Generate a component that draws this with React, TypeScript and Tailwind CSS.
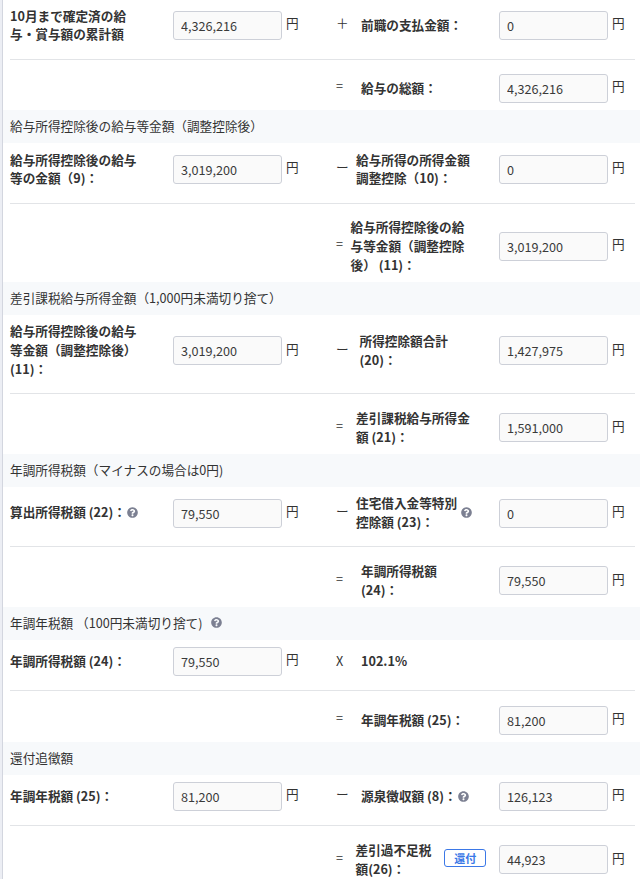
import { ReactNode } from "react";
import { FaQuestionCircle } from "react-icons/fa";

const Help = ({ className = "" }: { className?: string }) => (
  <FaQuestionCircle className={`shrink-0 text-[#7c8092] ${className}`} size={11} />
);

function Amount({ value, unitClass }: { value: string; unitClass: string }) {
  return (
    <div className="flex">
      <input
        readOnly
        value={value}
        className="h-[29px] w-[109px] rounded-[3px] border border-[#cdd0d8] bg-[#fafafa] px-[7px] text-[#3a3a3a] outline-none"
      />
      <span className={`ml-[4px] leading-[19px] ${unitClass}`}>円</span>
    </div>
  );
}

type RowProps = {
  className: string;
  label?: ReactNode;
  amount?: string;
  op: string;
  result: ReactNode;
  resultClass?: string;
  resultAmount?: string;
  unitClass?: string;
  opClass?: string;
  labelClass?: string;
};

function Row({
  className,
  label,
  amount,
  op,
  result,
  resultClass = "pl-[26px]",
  resultAmount,
  unitClass = "mt-[2px]",
  opClass = unitClass,
  labelClass = "leading-[18.9px]",
}: RowProps) {
  return (
    <div className={`ml-[7px] mr-[5px] flex items-start ${className}`}>
      <div className={`flex h-[29px] w-[163px] shrink-0 items-center font-bold ${labelClass}`}>
        {label}
      </div>
      <div className="w-[162px] shrink-0">
        {amount && <Amount value={amount} unitClass={unitClass} />}
      </div>
      <div className="flex w-[164px] shrink-0">
        <span className={`w-0 whitespace-nowrap pl-[1px] leading-[19px] ${opClass}`}>{op}</span>
        <div
          className={`-ml-[1px] flex h-[29px] items-center whitespace-nowrap font-bold ${labelClass} ${resultClass}`}
        >
          {result}
        </div>
      </div>
      {resultAmount && <Amount value={resultAmount} unitClass={unitClass} />}
    </div>
  );
}

const Heading = ({ children }: { children: ReactNode }) => (
  <h2 className="flex h-[33px] items-center bg-[#f7f9fb] pb-[2px] pl-[7px]">{children}</h2>
);

export default function App() {
  return (
    <main className="h-[879px] w-[640px] overflow-hidden border-l-2 border-[#eceef4] bg-white font-['Noto_Sans_CJK_JP',sans-serif] text-[12.65px] text-[#333]">
      <div className="h-full border-l border-[#d3d6df]">
        <Row
          className="h-[60px] border-b border-[#e2e4e7] pt-[11px]"
          label={<p>10月まで確定済の給<br />与・賞与額の累計額</p>}
          amount="4,326,216"
          op="＋"
          result="前職の支払金額："
          resultAmount="0"
          labelClass="pb-[2px] leading-[18px]"
        />
        <Row className="h-[50px] pt-[14px]" op="=" result="給与の総額：" resultAmount="4,326,216" />

        <Heading>給与所得控除後の給与等金額（調整控除後）</Heading>
        <Row
          className="h-[61px] border-b border-[#e2e4e7] pt-[12px]"
          label={<p>給与所得控除後の給与<br />等の金額（9)：</p>}
          amount="3,019,200"
          op="ー"
          result={<p>給与所得の所得金額<br />調整控除（10)：</p>}
          resultClass="pl-[21px]"
          resultAmount="0"
          labelClass="pb-[2px] leading-[18px]"
        />
        <Row
          className="h-[78px] pt-[28px]"
          op="="
          result={<p>給与所得控除後の給<br />与等金額（調整控除<br />後） (11)：</p>}
          resultClass="pl-[15.5px]"
          resultAmount="3,019,200"
        />

        <Heading>差引課税給与所得金額（1,000円未満切り捨て）</Heading>
        <Row
          className="h-[79px] border-b border-[#e2e4e7] pt-[21px]"
          label={<p>給与所得控除後の給与<br />等金額（調整控除後）<br />(11)：</p>}
          amount="3,019,200"
          op="ー"
          result={<p>所得控除額合計<br />(20)：</p>}
          resultClass="pl-[24.5px]"
          resultAmount="1,427,975"
          unitClass="mt-[3px]"
        />
        <Row
          className="h-[60px] pt-[19px]"
          op="="
          result={<p>差引課税給与所得金<br />額 (21)：</p>}
          resultClass="pl-[21px]"
          resultAmount="1,591,000"
          unitClass="mt-[3px]"
        />

        <Heading>年調所得税額（マイナスの場合は0円)</Heading>
        <Row
          className="h-[60px] border-b border-[#e2e4e7] pt-[12px]"
          label={<>算出所得税額 (22)：<Help className="ml-[1.5px]" /></>}
          amount="79,550"
          op="ー"
          result={<><p>住宅借入金等特別<br />控除額 (23)：</p><Help className="ml-[4px]" /></>}
          resultClass="pl-[21px]"
          resultAmount="0"
          labelClass="pb-[2px] leading-[18.9px]"
        />
        <Row
          className="h-[60px] pt-[19px]"
          op="="
          result={<p>年調所得税額<br />(24)：</p>}
          resultAmount="79,550"
          unitClass="mt-[3px]"
        />

        <Heading>年調年税額 （100円未満切り捨て)<Help className="ml-[9px]" /></Heading>
        <Row
          className="h-[51px] border-b border-[#e2e4e7] pt-[7px]"
          label="年調所得税額 (24)："
          amount="79,550"
          op="X"
          opClass="mt-[4px]"
          result="102.1%"
        />
        <Row className="h-[51px] pt-[15px]" op="=" result="年調年税額 (25)：" resultAmount="81,200" />

        <Heading>還付追徴額</Heading>
        <Row
          className="h-[51px] border-b border-[#e2e4e7] pt-[7px]"
          label="年調年税額 (25)："
          amount="81,200"
          op="ー"
          result={<>源泉徴収額 (8)：<Help className="ml-[1.5px]" /></>}
          resultAmount="126,123"
        />
        <Row
          className="h-[53px] pt-[19px]"
          op="="
          result={
            <>
              <p>差引過不足税<br />額(26)：</p>
              <span className="mb-[3px] ml-[13px] flex h-[18px] w-[42px] items-center justify-center rounded-[3px] border border-[#3b78e7] text-[11px] text-[#3b78e7]">
                還付
              </span>
            </>
          }
          resultClass="pl-[20.5px]"
          resultAmount="44,923"
          unitClass="mt-[3px]"
        />
      </div>
    </main>
  );
}
